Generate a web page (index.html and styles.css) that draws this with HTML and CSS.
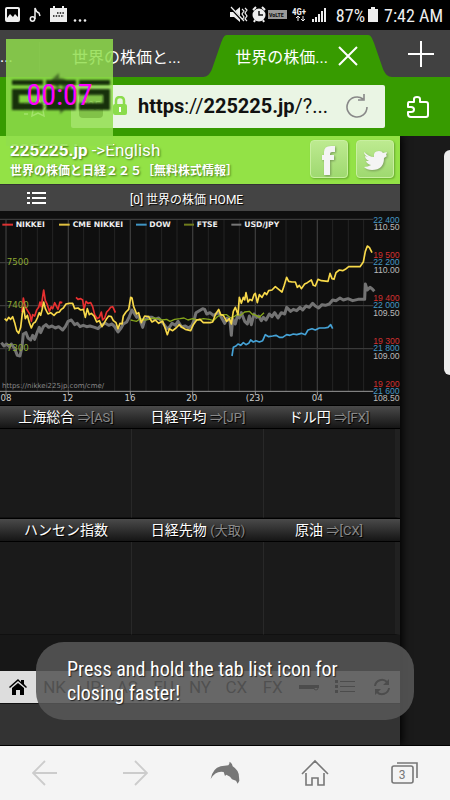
FILE: index.html
```
<!DOCTYPE html>
<html lang="ja">
<head>
    <meta charset="UTF-8">
    <meta name="viewport" content="width=device-width, initial-scale=1.0">
    <title>世界の株価 HOME</title>
    <link rel="stylesheet" href="styles.css">
</head>
<body>
    <div class="status-bar">
        <svg width="90" height="30" viewBox="0 0 90 30" fill="#eee">
            <path fill-rule="evenodd" d="M7 7h11q2 0 2 2v11q0 2-2 2H7q-2 0-2-2V9q0-2 2-2zm0 2v9l3-4 3 3 2-3 3 3V9z"/>
            <circle cx="32.500" cy="19" r="2.200" fill="none" stroke="#eee" stroke-width="1.500"/>
            <path d="M35 19V8q1 4 4 5l1 3" fill="none" stroke="#eee" stroke-width="1.500"/>
            <path d="M50 8h3V6h2v2h7V6h2v2h3v14H50z"/>
            <path d="M57 13h7M53 16h11" stroke="#111" stroke-width="1.500" stroke-dasharray="1.500 1.200"/>
            <circle cx="75" cy="20.500" r="1.300"/><circle cx="80" cy="20.500" r="1.300"/><circle cx="85" cy="20.500" r="1.300"/>
        </svg>
        <div class="status-right">
            <svg width="104" height="30" viewBox="229 0 104 30" fill="#eee">
                <path d="M230 12h4l6-5v15l-6-5h-4z"/>
                <path d="M230 7l14 15" stroke="#000" stroke-width="2.500"/>
                <path d="M231 7l13 14M242 9l2 2-2 3 2 3-2 3M245 8l2 2-2 3 2 3-2 3 2 2" stroke="#eee" stroke-width="1.200" fill="none"/>
                <circle cx="259" cy="15" r="6.500"/>
                <path d="M259 11v4h4" stroke="#111" stroke-width="1.500" fill="none"/>
                <path d="M253 10l3-3M265 10l-3-3M255 20l-1 2M263 20l1 2" stroke="#eee" stroke-width="2"/>
                <rect x="268" y="10" width="19" height="9" fill="#999"/>
                <text x="269" y="17" font-size="6" font-weight="bold" fill="#111">VoLTE</text>
                <text x="292" y="15" font-size="9" font-weight="bold">4G+</text>
                <path d="M298 16v5M296 18l2-2 2 2M303 16v5M301 19l2 2 2-2" stroke="#eee" fill="none"/>
                <path d="M312 22v-3h2v3zM315 22v-5h2v5zM318 22v-8h2v8zM321 22V11h2v11zM324 22V8h2v14z"/>
            </svg>
            <span>87%</span>
            <svg width="10" height="30" viewBox="0 0 10 30"><path d="M0 9h3V7h4v2h3v13H0z" fill="#eee"/></svg>
            <span class="time">7:42 AM</span>
        </div>
    </div>

    <div class="tabs">
        <span class="tab-cut">...</span>
        <button class="tab">世界の株価と...</button>
        <div class="tab-active">
            <svg class="edge" viewBox="0 0 24 42"><path d="M24 0v42H0c4 0 7-3 9-8l9-26c2-5 3-8 6-8z"/></svg>
            <button class="tab-name">世界の株価...</button>
            <button class="icon-btn" aria-label="Close tab">
                <svg width="20" height="20" viewBox="0 0 20 20"><path d="M1 1l18 18M19 1L1 19" stroke="#fff" stroke-width="2"/></svg>
            </button>
            <svg class="edge" viewBox="0 0 24 42"><path d="M0 0v42h24c-4 0-7-3-9-8L6 8C4 3 3 0 0 0z"/></svg>
        </div>
        <button class="icon-btn new-tab" aria-label="New tab">
            <svg width="26" height="26" viewBox="0 0 26 26"><path d="M13 0v26M0 13h26" stroke="#fff" stroke-width="2"/></svg>
        </button>
    </div>

    <div class="toolbar">
        <button class="icon-btn bookmark" aria-label="Bookmarks">
            <svg width="26" height="22" viewBox="0 0 26 22" fill="none" stroke="#fff" stroke-width="1.500"><path d="M1 8h6M1 13h6M1 18h4M15 2l3 6 7 1-5 5 1 6-6-3-6 3 1-6-3-4 5-1z"/></svg>
        </button>
        <div class="address">
            <span class="favicon">225</span>
            <svg width="16" height="20" viewBox="0 0 16 20"><path d="M4 9V5q0-4 4-4t4 4v4" fill="none" stroke="#8bdc4c" stroke-width="2.500"/><rect x="1" y="8" width="14" height="11" rx="2" fill="#8bdc4c"/><path d="M8 11v5" stroke="#fff" stroke-width="2"/></svg>
            <span class="url"><b>https</b>://<b>225225.jp</b>/?...</span>
            <button class="icon-btn" aria-label="Reload">
                <svg width="24" height="26" viewBox="0 0 24 26" fill="none" stroke="#888" stroke-width="1.600"><path d="M18 6a10 10 0 1 0 4 8M19 1v6h-6"/></svg>
            </button>
        </div>
        <button class="icon-btn addons" aria-label="Add-ons">
            <svg width="24" height="24" viewBox="0 0 24 24" fill="none" stroke="#fff" stroke-width="2" stroke-linejoin="round"><path d="M3 7h5V4q0-2 3-2t3 2v3h6q2 0 2 2v11q0 2-2 2H5q-3 0-3-3v-2h3q3 0 3-2.500T5 12H2V9q0-2 1-2z"/></svg>
        </button>
    </div>

    <main class="content">
        <div class="site">
            <header class="site-header">
                <div class="brand">
                    <p class="site-name"><b>225225.jp</b> <a href="#">-&gt;English</a></p>
                    <h1>世界の株価と日経２２５［無料株式情報］</h1>
                </div>
                <a class="social" href="#" aria-label="Facebook">
                    <svg viewBox="0 0 36 36"><path d="M13 34V19h-2v-5h2v-3q0-6 7-6h4v6h-3q-2 0-2 2v1h4v5h-4v15z"/></svg>
                </a>
                <a class="social" href="#" aria-label="Twitter">
                    <svg viewBox="0 0 36 36"><path d="M7 11q5 5 10 5-1-6 5-6 3 0 4 2l4-1-1 3 1 1-3 2q0 12-12 12-5 0-8-3 4 0 7-2-4-1-5-4h3q-4-2-4-5l3 1q-4-2-4-5z"/></svg>
                </a>
            </header>

            <nav class="site-nav">
                <button class="icon-btn" aria-label="Menu">
                    <svg width="20" height="14" viewBox="0 0 20 14" fill="#fff"><path d="M0 1h3v2H0zM5 1h14v2H5zM0 6h3v2H0zM5 6h14v2H5zM0 11h3v2H0zM5 11h14v2H5z"/></svg>
                </button>
                <span class="nav-title">[0] 世界の株価 HOME</span>
            </nav>

            <svg class="chart" viewBox="0 3 1200 582" role="img" aria-label="Nikkei, Dow, FTSE and USD/JPY">
                <rect y="3" width="1200" height="582" fill="#0f0f0f"/>
                <path class="minor" d="M65 28v516M112 28v516M158 28v516M251 28v516M298 28v516M344 28v516M438 28v516M485 28v516M531 28v516M625 28v516M672 28v516M718 28v516M812 28v516M858 28v516M905 28v516M998 28v516M1045 28v516M1091 28v516"/>
                <path class="major" d="M18 28v516M205 28v516M391 28v516M578 28v516M766 28v516M952 28v516M0 28h1120M0 158h1120M0 287h1120M0 416h1120"/>
                <path class="axis" d="M0 544h1120M18 544v12M205 544v12M391 544v12M578 544v12M766 544v12M952 544v12"/>

                <polyline class="line usd" points="4,398 12,408 20,402 28,410 34,402 44,416 52,436 60,438 66,410 70,372 78,368 84,384 92,390 98,376 104,388 112,366 118,352 122,368 130,350 138,344 146,352 156,348 166,354 176,350 188,360 196,350 204,334 214,330 224,344 232,340 240,350 250,346 260,350 270,348 284,352 294,356 306,344 316,340 326,346 336,342 344,350 354,366 362,356 370,342 380,336 388,320 396,300 404,312 410,322 416,318 422,336 428,352 434,330 444,322 456,322 466,328 476,324 486,336 494,346 500,356 508,352 516,340 526,346 534,334 544,350 556,348 566,354 576,346 582,332 588,308 598,302 608,296 614,298 620,312 630,308 640,316 648,312 656,306 664,322 674,340 682,324 690,334 694,376 698,326 706,342 712,318 718,324 724,308 734,334 742,342 748,318 754,344 762,312 770,322 776,318 784,332 790,322 798,330 808,312 816,320 824,308 834,324 844,308 854,312 860,292 866,298 872,304 880,298 890,302 900,292 908,300 918,288 928,292 938,280 946,288 956,294 966,284 976,286 988,282 998,270 1008,272 1020,264 1030,270 1044,266 1058,272 1074,268 1094,268 1096,222 1102,240 1110,232 1116,236 1123,244"/>
                <polyline class="line ftse" points="392,330 400,332 410,334 420,326 434,330 448,328 460,324 474,326 486,330 500,328 510,334 524,328 540,326 552,324 564,330 578,326 594,330 610,326 628,328 640,332 652,320 664,314 680,314 692,324 702,320 710,314 722,316 734,306 748,304 756,312 768,316 778,322 792,308"/>
                <polyline class="line nikkei" points="66,306 70,264 74,282 78,294 84,304 90,314 94,334 98,314 104,318 110,300 116,292 120,276 124,290 128,260 131,240 136,272 142,284 148,304 154,290 158,296 164,278 168,286 174,298 180,276 187,278"/>
                <polyline class="line nikkei" points="228,262 234,268 242,266 248,270 252,298 258,274 264,280 272,278 278,290 284,314 292,326 298,322 304,306 308,330 314,324 320,306 326,300 332,292 338,290 342,298 346,308"/>
                <polyline class="line cme" points="14,326 20,332 26,322 32,328 38,320 44,338 50,362 56,370 62,352 67,310 71,292 76,326 82,316 88,338 94,354 100,340 106,336 112,324 118,308 122,316 126,300 131,276 136,296 144,312 152,308 162,316 170,308 178,306 184,298 190,294 198,282 208,280 218,280 224,296 234,294 242,300 250,298 256,322 262,296 268,314 274,310 282,318 290,336 298,332 306,350 312,340 320,326 326,318 334,320 340,332 348,338 354,356 360,340 366,342 370,318 378,306 386,298 392,262 396,264 401,290 410,312 416,308 424,338 434,318 446,320 456,336 466,330 476,340 488,334 496,356 502,374 508,356 518,362 528,354 538,344 546,352 556,358 572,362 580,344 590,330 600,328 610,338 630,338 638,336 646,314 656,298 662,314 670,316 680,334 688,326 694,342 700,304 706,292 714,314 718,262 724,280 730,262 734,270 738,248 744,276 750,268 756,272 762,254 766,250 772,278 778,254 786,262 794,248 800,254 806,242 816,240 826,230 836,238 846,246 852,228 860,202 866,214 876,216 886,216 892,232 898,226 904,236 914,222 922,218 934,210 940,226 946,228 954,208 964,212 984,214 990,190 996,206 1002,208 1008,188 1018,180 1028,182 1036,178 1046,170 1060,170 1080,170 1090,156 1096,124 1102,108 1108,112 1116,128"/>
                <polyline class="line dow" points="696,438 700,412 708,408 714,402 722,406 730,398 738,404 746,400 752,390 760,396 768,392 778,396 788,392 796,374 806,380 818,378 828,376 838,382 848,382 860,374 870,376 880,372 890,374 904,370 916,374 924,360 936,356 946,360 958,354 974,354 984,352 992,344 998,356"/>

                <g class="scale-left">
                    <text x="20" y="165">7500</text>
                    <text x="20" y="294">7400</text>
                    <text x="20" y="423">7300</text>
                </g>
                <g class="legend">
                    <path d="M7 44h32" stroke="#d33"/><text x="47" y="52">NIKKEI</text>
                    <path d="M177 44h32" stroke="#e0c040"/><text x="218" y="52">CME NIKKEI</text>
                    <path d="M408 44h32" stroke="#3f95c4"/><text x="448" y="52">DOW</text>
                    <path d="M552 44h30" stroke="#6f7c1c"/><text x="590" y="52">FTSE</text>
                    <path d="M694 44h30" stroke="#777" stroke-width="8"/><text x="733" y="52">USD/JPY</text>
                </g>
                <text class="source" x="6" y="533">https://nikkei225jp.com/cme/</text>
                <g class="hours">
                    <text x="18" y="573">08</text><text x="203" y="573">12</text><text x="390" y="573">16</text>
                    <text x="575" y="573">20</text><text x="764" y="573">(23)</text><text x="952" y="573">04</text>
                </g>
                <g class="scale-right">
                    <text class="red" x="1199" y="144">19 500</text>
                    <text class="red" x="1199" y="273">19 400</text>
                    <text class="red" x="1199" y="402">19 300</text>
                    <text class="red" x="1199" y="531">19 200</text>
                    <text class="blue" x="1199" y="38">22 400</text>
                    <text class="blue" x="1199" y="165">22 200</text>
                    <text class="blue" x="1199" y="294">22 000</text>
                    <text class="blue" x="1199" y="423">21 800</text>
                    <text class="blue" x="1199" y="552">21 600</text>
                    <text x="1199" y="60">110.50</text>
                    <text x="1199" y="189">110.00</text>
                    <text x="1199" y="317">109.50</text>
                    <text x="1199" y="446">109.00</text>
                    <text x="1199" y="574">108.50</text>
                </g>
            </svg>

            <section class="quotes">
                <article><h2>上海総合 <a href="#">⇒[AS]</a></h2></article>
                <article><h2>日経平均 <a href="#">⇒[JP]</a></h2></article>
                <article><h2>ドル円 <a href="#">⇒[FX]</a></h2></article>
                <article><h2>ハンセン指数</h2></article>
                <article><h2>日経先物 <a href="#">(大取)</a></h2></article>
                <article><h2>原油 <a href="#">⇒[CX]</a></h2></article>
            </section>

            <nav class="markets">
                <a href="#" aria-label="Home"><svg width="18" height="18" viewBox="0 0 18 18"><path d="M0 9l9-8 3 3V2h3v4l3 3-1 1-8-7-8 7zM3 10l6-5 6 5v7h-4v-5H7v5H3z" fill="#000"/></svg></a>
                <a href="#">NK</a>
                <a href="#">JP</a>
                <a href="#">AS</a>
                <a href="#">EU</a>
                <a href="#">NY</a>
                <a href="#">CX</a>
                <a href="#">FX</a>
                <a href="#" aria-label="Tools"><svg width="20" height="8" viewBox="0 0 20 8"><path d="M0 2h20v3h-5v1H0z"/><circle cx="17" cy="5" r="2" fill="none" stroke="#000"/></svg></a>
                <a href="#" aria-label="List"><svg width="20" height="14" viewBox="0 0 20 14"><path d="M0 0h3v3H0zM5 1h15v1H5zM0 5h3v3H0zM5 6h15v1H5zM0 10h3v3H0zM5 11h15v1H5z"/></svg></a>
                <a href="#" aria-label="Refresh"><svg width="18" height="18" viewBox="0 0 18 18"><path d="M2 8a7 7 0 0 1 12-4M16 10a7 7 0 0 1-12 4" fill="none" stroke="#000" stroke-width="2"/><path d="M16 1v6h-6zM2 17v-6h6z"/></svg></a>
            </nav>
        </div>
        <aside class="side"><div class="panel"></div></aside>
    </main>

    <div class="toast" role="status">Press and hold the tab list icon for closing faster!</div>

    <nav class="bottom-bar">
        <button class="icon-btn" aria-label="Back"><svg width="26" height="26" viewBox="0 0 26 26" fill="none" stroke="#ccc" stroke-width="1.800"><path d="M25 13H2M13 1L1 13l12 12"/></svg></button>
        <button class="icon-btn" aria-label="Forward"><svg width="26" height="26" viewBox="0 0 26 26" fill="none" stroke="#ccc" stroke-width="1.800"><path d="M1 13h23M13 1l12 12-12 12"/></svg></button>
        <button class="icon-btn" aria-label="Menu"><svg width="30" height="24" viewBox="30 49 90 72" fill="#777"><path d="M32 103Q38 71 62 65L85 62Q90 57 88 51 98 56 98 65 117 77 117 97L118 108 113 117 108 108 96 104 90 96 79 90 75 94 71 82Q47 77 32 103z"/></svg></button>
        <button class="icon-btn" aria-label="Home"><svg width="28" height="28" viewBox="0 0 28 28" fill="none" stroke="#777" stroke-width="1.600"><path d="M1 15L14 2l13 13M5 14v12h6v-7h6v7h6V14"/></svg></button>
        <button class="icon-btn" aria-label="3 tabs"><svg width="28" height="24" viewBox="0 0 28 24" fill="none" stroke="#777" stroke-width="1.600"><path d="M6 2h20v15"/><rect x="1" y="5" width="21" height="17" rx="2"/><text x="11" y="18" font-size="12" text-anchor="middle" fill="#777" stroke="none">3</text></svg></button>
    </nav>

    <!-- floating timer -->
    <div class="timer">
        <svg viewBox="0 0 107 107">
            <path d="M44 42l9-8v5q11 0 13 12h-8q-1-5-5-5v5zM63 67l-9 8v-5h-7v-6h7v-5z" fill="#466d28"/>
            <path d="M6 41h31v5H6zM40 41h30v5H40zM73 41h31v5H73zM6 50h31v6H13v8h24v7H6zM40 50h30v21H40zM73 50h31v21H73v-7h24v-8H73z" fill="#17300b"/>
        </svg>
        <span>00:07</span>
    </div>
</body>
</html>
```
FILE: styles.css
```
* {
    box-sizing: border-box;
}

body {
    margin: 0;
    min-height: 100vh;
    display: flex;
    flex-direction: column;
    position: relative;
    background: #1a1a1a;
    color: #fff;
    font-family: Roboto, "Noto Sans CJK JP", sans-serif;
}

h1, h2, p {
    margin: 0;
}

a {
    color: inherit;
    text-decoration: none;
}

button {
    padding: 0;
    border: none;
    background: none;
    color: inherit;
    font: inherit;
}

svg {
    display: block;
    flex-shrink: 0;
}

.icon-btn {
    display: flex;
    align-items: center;
    justify-content: center;
}

/* Android status bar */
.status-bar {
    display: flex;
    justify-content: space-between;
    height: 30px;
    background: #000;
    color: #eee;
    font-family: "Roboto Condensed", Roboto, sans-serif;
    font-size: 18px;
    line-height: 31px;
}

.status-right {
    display: flex;
    gap: 3px;
    padding-right: 7px;
}

.time {
    padding-left: 3px;
}

/* Browser tabs */
.tabs {
    display: flex;
    height: 47px;
    background: #414141;
    font-size: 16px;
}

.tab-cut {
    width: 40px;
    height: 30px;
    margin-top: 12px;
    border-right: 1px solid #555;
    line-height: 30px;
}

.tab {
    flex: 1;
    padding-left: 32px;
    text-align: left;
    white-space: nowrap;
    padding-top: 5px;
}

.tab-active {
    display: flex;
    align-items: center;
    height: 42px;
    margin-top: 5px;
}

.edge {
    width: 24px;
    height: 42px;
    fill: #379b00;
}

.tab-name {
    height: 42px;
    padding-left: 8px;
    background: #379b00;
}

.tab-active .icon-btn {
    width: 40px;
    height: 42px;
    background: #379b00;
}

.new-tab {
    width: 58px;
}

/* Address bar */
.toolbar {
    display: flex;
    align-items: center;
    height: 59px;
    background: #379b00;
    position: relative;
    z-index: 2;
}

.bookmark {
    width: 71px;
}

.address {
    flex: 1;
    display: flex;
    align-items: center;
    height: 43px;
    margin-bottom: 1px;
    padding: 0 16px 0 8px;
    border-radius: 2px;
    background: #eaf5e4;
    color: #111;
}

.favicon {
    width: 24px;
    height: 24px;
    margin-right: 9px;
    border-radius: 4px;
    background: #333;
    color: #ddd;
    font-size: 12px;
    line-height: 24px;
    text-align: center;
}

.url {
    flex: 1;
    margin-left: 10px;
    font-size: 20px;
}

.addons {
    width: 65px;
}

/* Web page */
.content {
    flex: 1;
    display: flex;
}

.site {
    flex: 1;
    display: flex;
    flex-direction: column;
    background: #333;
    box-shadow: 2px 0 8px #000;
    z-index: 1;
}

.site-header {
    display: flex;
    gap: 8px;
    height: 48px;
    padding: 4px 6px 0 10px;
    background: #93e246;
    text-shadow: 1px 1px 2px #467a18;
}

.brand {
    flex: 1;
    white-space: nowrap;
}

.site-name {
    font-size: 17px;
    line-height: 21px;
}

.site-header h1 {
    font-size: 12px;
    line-height: 20px;
}

.social {
    width: 38px;
    height: 38px;
    border: 1px solid #c8efa0;
    border-radius: 4px;
    background: linear-gradient(#bdea90, #9fd970);
    box-shadow: 1px 1px 2px #68a832;
}

.social path {
    fill: #f4f4f4;
    filter: drop-shadow(1px 1px 1px #789d58);
}

.site-nav {
    display: flex;
    align-items: center;
    height: 27px;
    border-top: 1px solid #333;
    background: #444;
    text-shadow: 1px 1px 1px #000;
}

.site-nav .icon-btn {
    width: 73px;
}

.nav-title {
    flex: 1;
    padding-left: 57px;
    font-size: 12px;
}

/* Chart */
.chart {
    width: 100%;
}

.chart text {
    font-family: "DejaVu Sans", sans-serif;
    font-size: 26px;
}

.minor {
    stroke: #252525;
    stroke-width: 3px;
}

.major {
    stroke: #3a3a3a;
    stroke-width: 4px;
}

.axis {
    stroke: #999;
    stroke-width: 3px;
}

.line {
    fill: none;
    stroke-width: 5px;
    stroke-linejoin: round;
}

.usd {
    stroke: #737373;
    stroke-width: 9px;
}

.ftse {
    stroke: #86a61c;
    stroke-width: 4px;
}

.nikkei {
    stroke: #e83030;
}

.cme {
    stroke: #f8d94a;
}

.dow {
    stroke: #45a2d6;
}

.legend path {
    stroke-width: 6px;
}

.chart .legend text {
    fill: #eee;
    font-size: 23px;
    font-weight: bold;
}

.scale-left text {
    fill: #8ba632;
}

.chart .source {
    fill: #888;
    font-size: 21px;
}

.hours text {
    fill: #ccc;
    text-anchor: middle;
}

.chart .scale-right text {
    fill: #bbb;
    font-family: "Liberation Sans", sans-serif;
    text-anchor: end;
}

.chart .scale-right .red {
    fill: #cf2f2f;
}

.chart .scale-right .blue {
    fill: #4596c2;
}

/* Quote boxes */
.quotes {
    display: grid;
    grid-template-columns: 132fr 132fr 136fr;
    grid-template-rows: 113px 117px;
    padding-bottom: 36px;
    background: #171717;
}

.quotes article {
    border-right: 1px solid #282828;
    border-bottom: 1px solid #101010;
    background: #1a1a1a;
}

.quotes h2 {
    height: 24px;
    margin-right: -1px;
    border-top: 1px solid #000;
    border-bottom: 1px solid #000;
    background: linear-gradient(#4a4a4a, #151515);
    font-size: 14px;
    font-weight: normal;
    line-height: 22px;
    text-align: center;
    text-shadow: 1px 1px 1px #000;
}

.quotes article:nth-child(3n) {
    border-right: 5px solid #212121;
}

.quotes article:nth-child(3n) h2 {
    margin-right: -5px;
    padding-right: 6px;
}

.quotes a {
    color: #8a8a8a;
    font-size: 13px;
}

.markets {
    display: grid;
    grid-template-columns: repeat(11, 1fr);
    height: 33px;
    border-bottom: 1px solid #111;
    background: #ddd;
    color: #222;
    font-size: 17px;
}

.markets a {
    display: flex;
    align-items: center;
    justify-content: center;
}

.side {
    width: 50px;
    padding: 14px 0 0 44px;
}

.panel {
    height: 225px;
    border-radius: 6px 0 0 6px;
    background: #eee;
}

.toast {
    position: absolute;
    z-index: 2;
    left: 8%;
    right: 8%;
    bottom: 80px;
    padding: 15px 50px 15px 31px;
    border-radius: 28px;
    background: rgba(86, 86, 86, 0.88);
    font-family: "Roboto Condensed", Roboto, sans-serif;
    font-size: 20px;
    line-height: 24px;
    text-shadow: 1px 1px 1px #222;
}

/* Browser bottom bar */
.bottom-bar {
    display: grid;
    grid-template-columns: repeat(5, 1fr);
    height: 55px;
    border-top: 1px solid #000;
    background: #f4f4f4;
    z-index: 1;
}

.timer {
    position: absolute;
    z-index: 3;
    top: 39px;
    left: 6px;
    width: 107px;
    height: 107px;
    background: rgba(144, 222, 76, 0.84);
    color: #f0f;
}

.timer svg {
    filter: blur(1px);
}

.timer span {
    position: absolute;
    inset: 39px 0 auto;
    font-family: "Roboto Condensed", Roboto, sans-serif;
    font-size: 30px;
    line-height: 34px;
    text-align: center;
}
```
